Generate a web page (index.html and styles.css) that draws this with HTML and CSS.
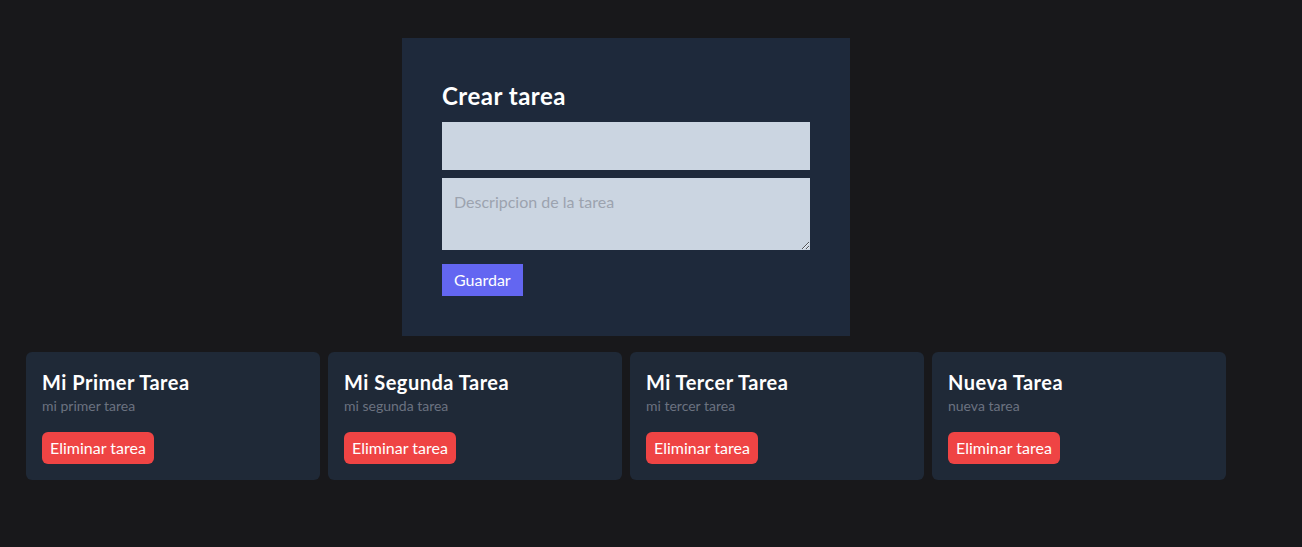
FILE: index.html
```html
<!DOCTYPE html>
<html lang="es">
<head>
<meta charset="utf-8">
<title>Tareas</title>
<link rel="stylesheet" href="styles.css">
</head>
<body>
<main class="page">
  <div class="form-wrap">
    <form class="task-form">
      <h1 class="form-title">Crear tarea</h1>
      <input class="field field-input" type="text">
      <textarea class="field field-area" rows="2" placeholder="Descripcion de la tarea"></textarea>
      <button type="button" class="btn-save">Guardar</button>
    </form>
  </div>
  <section class="cards">
    <article class="card">
      <h2 class="card-title">Mi Primer Tarea</h2>
      <p class="card-desc">mi primer tarea</p>
      <button type="button" class="btn-delete">Eliminar tarea</button>
    </article>
    <article class="card">
      <h2 class="card-title">Mi Segunda Tarea</h2>
      <p class="card-desc">mi segunda tarea</p>
      <button type="button" class="btn-delete">Eliminar tarea</button>
    </article>
    <article class="card">
      <h2 class="card-title">Mi Tercer Tarea</h2>
      <p class="card-desc">mi tercer tarea</p>
      <button type="button" class="btn-delete">Eliminar tarea</button>
    </article>
    <article class="card">
      <h2 class="card-title">Nueva Tarea</h2>
      <p class="card-desc">nueva tarea</p>
      <button type="button" class="btn-delete">Eliminar tarea</button>
    </article>
  </section>
</main>
</body>
</html>
```
FILE: styles.css
```css
* { box-sizing: border-box; }
html, body {
  margin: 0;
  background: #18181b;
  height: 100%;
}
body {
  font-family: Lato, "Noto Sans", Arial, sans-serif;
  color: #fff;
  font-size: 16px;
  line-height: 24px;
}
.page {
  width: 1252px;
  padding-top: 38px;
}
.form-wrap {
  display: flex;
  justify-content: center;
}
.task-form {
  width: 448px;
  background: #1e293b;
  padding: 40px;
  display: flex;
  flex-direction: column;
  align-items: flex-start;
}
.form-title {
  margin: 0 0 10px;
  padding-top: 2px;
  font-size: 24px;
  line-height: 32px;
  font-weight: 700;
  letter-spacing: 0.5px;
}
.field {
  width: 100%;
  background: #cbd5e1;
  border: 0;
  padding: 12px;
  font: inherit;
  color: #000;
  margin: 0;
  outline: none;
  display: block;
}
.field-input { height: 48px; margin-bottom: 8px; }
.field-area { height: 72px; margin-bottom: 14px; resize: vertical; }
.field::placeholder { color: #9ca3af; }
.btn-save {
  background: #6366f1;
  color: #fff;
  border: 0;
  padding: 4px 12px;
  font: inherit;
  height: 32px;
}
.cards {
  margin-top: 16px;
  padding: 0 26px;
  display: grid;
  grid-template-columns: repeat(4, 1fr);
  gap: 8px;
}
.card {
  background: #1f2937;
  border-radius: 6px;
  padding: 16px;
}
.card-title {
  margin: 0;
  font-size: 20px;
  line-height: 28px;
  font-weight: 700;
  letter-spacing: 0.5px;
}
.card-desc {
  margin: 0;
  font-size: 14px;
  line-height: 20px;
  color: #6b7280;
}
.btn-delete {
  margin-top: 16px;
  background: #ef4444;
  color: #fff;
  border: 0;
  border-radius: 6px;
  padding: 4px 8px;
  font: inherit;
  height: 32px;
}
```
